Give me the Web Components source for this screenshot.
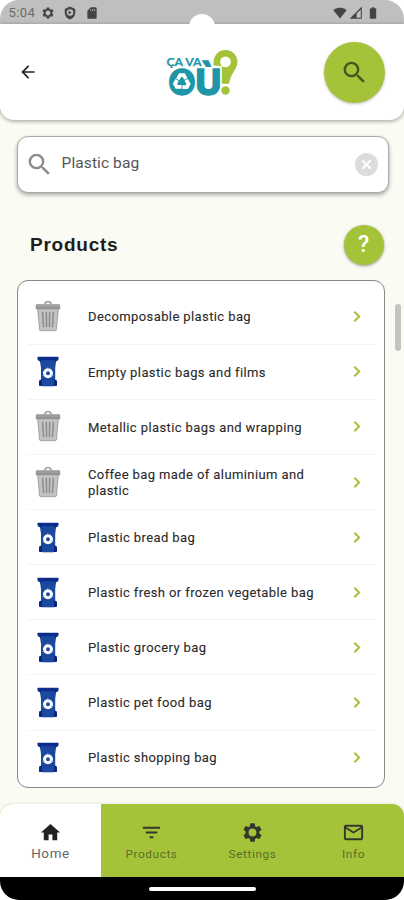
<!DOCTYPE html>
<html lang="en">
<head>
<meta charset="utf-8">
<meta name="viewport" content="width=device-width, initial-scale=1">
<title>Ça va où ?</title>
<style>
html,body{margin:0;height:900px;overflow:hidden;background:#fafbf3}
body{font-family:Roboto,"Liberation Sans",sans-serif;color:#222}
</style>
</head>
<body>
<app-screen></app-screen>
<script>
const define = (name, html) => customElements.define(name, class extends HTMLElement {
  connectedCallback() {
    if (this.shadowRoot) return;
    this.attachShadow({ mode: 'open' }).innerHTML = typeof html === 'function' ? html(this) : html;
  }
});

const GEAR = '<path fill-rule="evenodd" d="M19.14 12.94c.04-.3.06-.61.06-.94s-.02-.64-.07-.94l2.03-1.58a.49.49 0 0 0 .12-.61l-1.92-3.32a.49.49 0 0 0-.59-.22l-2.39.96a7 7 0 0 0-1.62-.94l-.36-2.54a.48.48 0 0 0-.48-.41h-3.84a.47.47 0 0 0-.47.41l-.36 2.54c-.59.24-1.13.57-1.62.94l-2.39-.96a.48.48 0 0 0-.59.22L2.74 8.87a.48.48 0 0 0 .12.61l2.03 1.58c-.05.3-.09.63-.09.94s.02.64.07.94l-2.03 1.58a.49.49 0 0 0-.12.61l1.92 3.32c.12.22.37.29.59.22l2.39-.96c.5.38 1.03.7 1.62.94l.36 2.54c.05.24.24.41.48.41h3.84c.24 0 .44-.17.47-.41l.36-2.54c.59-.24 1.13-.56 1.62-.94l2.39.96c.22.08.47 0 .59-.22l1.92-3.32a.48.48 0 0 0-.12-.61zM12 16.1A4.1 4.1 0 1 1 12 7.9a4.1 4.1 0 0 1 0 8.2z"/>';
const ICONS = {
  gear: GEAR,
  shield: '<path fill-rule="evenodd" d="M12 1 3 5v6c0 5.500 3.800 10.700 9 12 5.200-1.300 9-6.500 9-12V5zM12 5.500a5.500 5.500 0 0 1 5.500 5.500A5.500 5.500 0 1 1 12 5.500zM9.500 8v6.500l5.500-3.200z"/>',
  sd: '<path fill-rule="evenodd" d="M18 2h-8L4 8v12c0 1.100.9 2 2 2h12c1.100 0 2-.9 2-2V4c0-1.100-.9-2-2-2zM9.300 5.500h1.400v3H9.300zm3.200 0h1.400v3h-1.400zm3.200 0h1.400v3h-1.400z"/>',
  wifi: '<path d="M12 21.500 23.600 7C23.200 6.700 18.700 3 12 3S.8 6.700.4 7z"/>',
  signal: '<path fill-rule="evenodd" d="M1 22h21V1zM13 20v-7L20.200 6v14z"/>',
  battery: '<path d="M16.200 4H14V2h-4v2H7.800C7.100 4 6.500 4.600 6.500 5.300v15.400c0 .7.600 1.300 1.300 1.300h8.400c.7 0 1.300-.6 1.300-1.300V5.300c0-.7-.6-1.300-1.300-1.300z"/>',
  back: '<path d="M20 11H7.830l5.590-5.590L12 4l-8 8 8 8 1.410-1.410L7.830 13H20z"/>',
  search: '<path d="M15.500 14h-.79l-.28-.27A6.470 6.470 0 0 0 16 9.500 6.500 6.500 0 1 0 9.500 16c1.610 0 3.090-.59 4.230-1.570l.27.280v.79l5 4.990L20.490 19zm-6 0a4.500 4.500 0 1 1 0-9 4.500 4.500 0 0 1 0 9z"/>',
  clear: '<circle cx="12" cy="12" r="12" fill="#dcdcdc"/><path d="m7.600 7.600 8.800 8.800m0-8.800-8.800 8.800" stroke="#fff" stroke-width="2" fill="none"/>',
  chevron: '<path d="m7.500 5.200 6.800 6.800-6.800 6.800" fill="none" stroke="currentColor" stroke-width="2.900"/>',
  home: '<path d="M10 20v-6h4v6h5v-8h3L12 3 2 12h3v8z"/>',
  filter: '<path d="M10 18h4v-2h-4zM3 6v2h18V6zm3 7h12v-2H6z"/>',
  mail: '<path d="M20 4H4c-1.100 0-2 .9-2 2v12c0 1.100.9 2 2 2h16c1.100 0 2-.9 2-2V6c0-1.100-.9-2-2-2zm0 14H4V8l8 5 8-5zm-8-7L4 6h16z"/>',
  trash: `<path d="M9.800 3.200a3.200 2.600 0 0 1 6.400 0" fill="none" stroke="#999" stroke-width="1.500"/>
    <path d="M2.600 7h20.800l-2 21.700q-.1 1-1.200 1H5.800q-1.100 0-1.200-1z" fill="#c2c2c2" stroke="#a3a3a3" stroke-width="1"/>
    <path d="M.8 8.300V4.600q0-1.300 1.300-1.300h21.800q1.300 0 1.300 1.300v3.700z" fill="#949494"/><path d="M1.800 5h22.400" stroke="#a9a9a9" stroke-width="1"/>
    <path d="m7.600 11.500.9 14M11.300 11.500l.3 14M14.700 11.500l-.3 14M18.400 11.500l-.9 14" fill="none" stroke="#8d8d8d" stroke-width="1.500" stroke-linecap="round"/>`,
  bin: `<g transform="translate(2)"><path d="M2.800 4h16.400l-1 8v14H4V12z" fill="#1b49a0"/>
    <path d="M1.500.8h19q1.300 0 1.200 1.300l-.5 1.700q-.2 1-1.200 1l-2 1.400H4L2 4.800q-.9 0-1.200-1L.3 2.100Q.2.8 1.500.8z" fill="#0b2c8a"/>
    <path d="M4 5.500h14" stroke="#1b49a0" stroke-width="2.500"/>
    <path d="M2 25.300q0-1.500 1.600-1.500h14.800q1.600 0 1.600 1.500v3.900q0 .8-.8.800H2.800q-.8 0-.8-.8z" fill="#0b2680"/>
    <path d="M5 23.500h12v6.800H5z" fill="#1b49a0"/>
    <circle cx="11" cy="17.200" r="3.500" fill="none" stroke="#fff" stroke-width="3.100"/><path d="m10.500 11 1.500 2.400m4.300 6.300-2.500-.9m-8.300.9 2.200-1.800" stroke="#8da4d6" stroke-width=".9"/></g>`
};

define('app-icon', el => `<style>:host{display:block;flex:none;line-height:0}svg{display:block;width:100%;height:100%;fill:currentColor}</style>
<svg viewBox="${el.getAttribute('box') || '0 0 24 24'}">${ICONS[el.getAttribute('name')]}</svg>`);

define('status-bar', `<style>
:host{display:block;height:24px;background:#fff;position:relative}
.bar{height:24px;box-sizing:border-box;background:#bfbfbf;border-radius:19px 19px 0 0;display:flex;align-items:center;padding:1px 23px 0 8.500px;color:#444}
.time{font-size:13px;letter-spacing:.4px;width:32px;color:#6b6b6b}
.left{display:flex;gap:8px}.right{display:flex;gap:2px;margin-left:auto}
.left app-icon{width:14px;height:14px}.right app-icon{width:14px;height:14px}
.camera{position:absolute;left:189px;top:14px;width:26px;height:26px;border-radius:50%;background:#fff;z-index:2}
</style><div class="bar"><span class="time">5:04</span>
<div class="left"><app-icon name="gear"></app-icon><app-icon name="shield"></app-icon><app-icon name="sd"></app-icon></div>
<div class="right"><app-icon name="wifi"></app-icon><app-icon name="signal"></app-icon><app-icon name="battery" style="width:16px"></app-icon></div></div><div class="camera"></div>`);

define('brand-logo', `<style>:host{display:block;width:76px;height:52px}svg{display:block;overflow:visible}</style>
<svg width="76" height="52" viewBox="164 47 76 52" font-family="Lato,sans-serif">
<g fill="#1f96a8"><text x="166.500" y="65.500" font-size="12" font-weight="700" textLength="35" lengthAdjust="spacingAndGlyphs" stroke="#1f96a8" stroke-width=".25">ÇA VA</text>
<text y="94.500" font-family="Inter,sans-serif" font-size="35" font-weight="800" x="168.300" textLength="53" lengthAdjust="spacingAndGlyphs" stroke="#1f96a8" stroke-width="1.300">OÙ</text></g>
<ellipse cx="181.700" cy="82" rx="11" ry="12.500" fill="#1f96a8"/>
<g fill="none" stroke="#fff" stroke-width="3.700"><path d="m177.700 79.400 2.400-4.200h3.600l2.200 3.700"/><path d="m177.700 79.400 2.400-4.200h3.600l2.200 3.700" transform="rotate(120 181.800 82)"/><path d="m177.700 79.400 2.400-4.200h3.600l2.200 3.700" transform="rotate(240 181.800 82)"/></g>
<path fill="#fff" d="M213 65h9v3h-9z"/>
<g fill="#a5c339"><path fill-rule="evenodd" d="M213.500 65.500V62a12 12 0 1 1 22.600 5.600c-3 5.400-6.300 10.200-6.900 16.200h-7.400V66zM225.500 56.500a5.400 5.400 0 1 0 0 10.800 5.400 5.400 0 0 0 0-10.800z"/><circle cx="225.500" cy="90.500" r="4.200"/></g></svg>`);

define('app-header', `<style>
:host{display:flex;box-sizing:border-box;height:96px;background:#fff;border-radius:0 0 14px 14px;box-shadow:0 1px 4px #0006;align-items:center;justify-content:space-between;padding:0 19px 0 18px;position:relative}
.side{width:61px}.back{width:20px;height:20px;color:#222}
.round{width:61px;height:61px;border-radius:50%;background:#a5c339;display:grid;place-items:center;box-shadow:0 1px 3px #0004;color:#46561f}
.round app-icon{width:29px;height:29px}brand-logo{margin-top:2px}
</style><div class="side"><app-icon class="back" name="back"></app-icon></div><brand-logo></brand-logo><div class="round"><app-icon name="search"></app-icon></div>`);

define('search-field', `<style>
:host{display:flex;box-sizing:border-box;height:57px;margin:16px 15.500px 0 16.500px;border:1px solid #aaa;border-radius:11px;background:#fff;box-shadow:0 2px 4px #0005;align-items:center;padding:0 10px 0 7px}
.t{font-size:15.500px;color:#555;flex:1;margin-left:8px;letter-spacing:.1px;padding-bottom:3px}
</style><app-icon name="search" style="width:29px;height:29px;color:#8c8c8c"></app-icon><span class="t"><slot></slot></span><app-icon name="clear" style="width:23px;height:23px"></app-icon>`);

define('section-title', `<style>
:host{display:flex;height:40px;margin:31.500px 20.500px 0 30px;align-items:center;justify-content:space-between}
h1{margin:0;padding-top:1px;font:700 19px/24px "Liberation Sans",sans-serif;letter-spacing:.75px;color:#1d1d1d}
.help{width:40px;height:40px;border-radius:50%;background:#a5c339;box-shadow:0 1px 3px #0006;color:#fff;text-align:center;font:500 23px/40px Roboto,sans-serif}
</style><h1><slot></slot></h1><div class="help">?</div>`);

define('product-row', el => `<style>
:host{display:flex;box-sizing:border-box;height:55.120px;align-items:center;border-bottom:1px solid #f4f4f4;margin:0 8px 0 10px;padding:0 10px 0 7.500px}
:host(:last-child){border-bottom-color:transparent}
.pic{width:26px;height:31px}.t{flex:1;margin:0 30px 0 27px;padding-top:1px;font-size:13px;line-height:15.500px;letter-spacing:.4px;color:#2a2a2a;-webkit-text-stroke:.1px #2a2a2a}
.go{width:17px;height:17px;color:#a5c339}
</style><app-icon class="pic" name="${el.getAttribute('icon')}" box="0 0 26 31"></app-icon><span class="t"><slot></slot></span><app-icon class="go" name="chevron"></app-icon>`);

define('product-list', `<style>
:host{display:block;box-sizing:border-box;height:508px;margin:15.500px 19px 0 16.500px;border:1px solid #888;border-radius:11px;background:#fff;padding-top:8.700px}
</style><slot></slot>`);

define('nav-tab', el => `<style>
:host{display:flex;flex:1;flex-direction:column;align-items:center;padding-top:17px;color:#333;box-sizing:border-box}
:host([active]){background:#fff}
app-icon{width:23px;height:23px;color:#34382c}
span{font-size:11.800px;line-height:16px;letter-spacing:.6px;color:#5c6d2c;margin-top:2px}
:host([active]) app-icon{color:#222}
:host([active]) span{font-size:13.500px;color:#666;margin-top:1px}
</style><app-icon name="${el.getAttribute('icon')}"></app-icon><span><slot></slot></span>`);

define('bottom-nav', `<style>
:host{display:flex;height:73px;background:#a5c339;border-radius:12px 12px 0 0;overflow:hidden;box-shadow:0 -1px 3px #0001}
</style><slot></slot>`);

define('gesture-bar', `<style>
:host{display:block;height:23px;background:#fff}
div{height:23px;background:#000;border-radius:0 0 19px 19px;display:grid;place-items:center}
i{display:block;width:107px;height:4px;border-radius:2px;background:#fff}
</style><div><i></i></div>`);

define('app-screen', `<style>
:host{display:flex;flex-direction:column;width:404px;height:900px;position:relative;background:#fafbf3}
.foot{margin-top:auto}
.thumb{position:absolute;left:395px;top:304px;width:6px;height:47px;border-radius:3px;background:#c3c3c1}
</style>
<status-bar></status-bar><app-header></app-header>
<search-field>Plastic bag</search-field>
<section-title>Products</section-title>
<product-list>
<product-row icon="trash">Decomposable plastic bag</product-row>
<product-row icon="bin">Empty plastic bags and films</product-row>
<product-row icon="trash">Metallic plastic bags and wrapping</product-row>
<product-row icon="trash">Coffee bag made of aluminium and plastic</product-row>
<product-row icon="bin">Plastic bread bag</product-row>
<product-row icon="bin">Plastic fresh or frozen vegetable bag</product-row>
<product-row icon="bin">Plastic grocery bag</product-row>
<product-row icon="bin">Plastic pet food bag</product-row>
<product-row icon="bin">Plastic shopping bag</product-row>
</product-list>
<div class="thumb"></div>
<div class="foot"><bottom-nav>
<nav-tab icon="home" active>Home</nav-tab><nav-tab icon="filter">Products</nav-tab><nav-tab icon="gear">Settings</nav-tab><nav-tab icon="mail">Info</nav-tab>
</bottom-nav><gesture-bar></gesture-bar></div>`);
</script>
</body>
</html>
